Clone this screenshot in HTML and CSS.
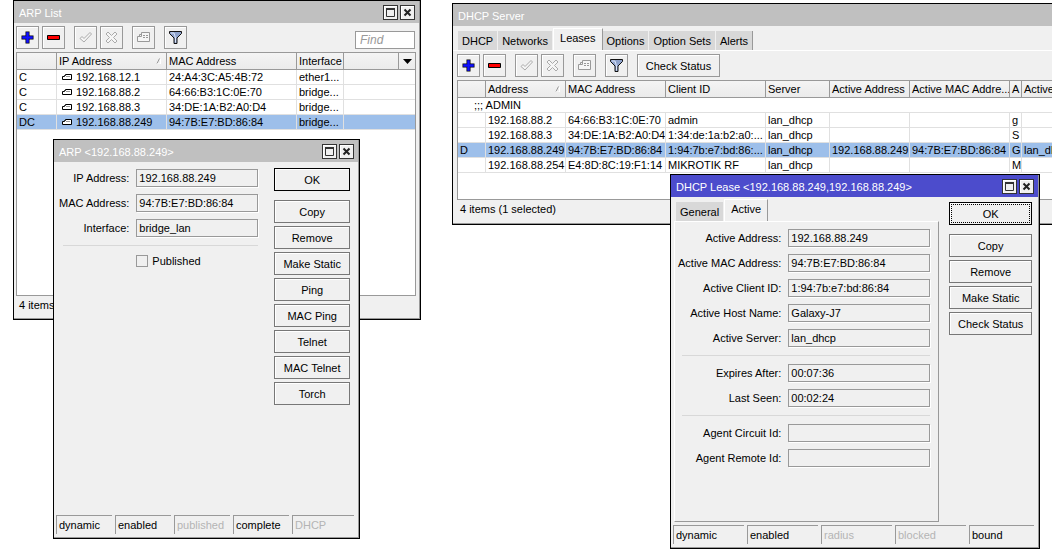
FILE: index.html
```html
<!DOCTYPE html>
<html lang="en">
<head>
	<meta charset="utf-8">
	<title>ARP List</title>
	<link rel="stylesheet" href="styles.css">
</head>
<body>
	<svg class="defs" aria-hidden="true">
		<symbol id="plus" viewBox="0 0 13 13"><path d="M4.500.5h4v4h4v4h-4v4h-4v-4h-4v-4h4z" fill="#000"/><path d="M5.500 1.500h2v4h4v2h-4v4h-2v-4h-4v-2h4z" fill="#11f" stroke="#11f" stroke-width=".6"/></symbol>
		<symbol id="minus" viewBox="0 0 13 13"><path d="M.5 4.500h12v4H.5z" fill="#f00" stroke="#000"/></symbol>
		<symbol id="check" viewBox="0 0 13 13"><path d="M1 7.500l2-2 2 2 6-6 1.500 1.500-7.500 8z" fill="#f6f6f6" stroke="#aaa"/></symbol>
		<symbol id="cross" viewBox="0 0 13 13"><path d="M1 3l2-2 3.500 3.500L10 1l2 2-3.500 3.500L12 10l-2 2-3.500-3.500L3 12l-2-2 3.500-3.500z" fill="#f6f6f6" stroke="#aaa"/></symbol>
		<symbol id="note" viewBox="0 0 15 13"><path d="M5.500 1.500h8v9h-12v-5h2v-2h2z" fill="#f6f6f6" stroke="#999"/><path d="M2 5.500h3.500V2M7 4.500h2m1 0h2M7 6.500h2m1 0h2" fill="none" stroke="#999"/></symbol>
		<symbol id="funnel" viewBox="0 0 13 13"><path d="M.5.5h12v2L8 7v5.500H5V7L.5 2.500z" fill="#8fa3cc" stroke="#111"/><path d="M2 2h3l1.500 5v4.500" fill="none" stroke="#dde6fa"/></symbol>
		<symbol id="tag" viewBox="0 0 11 8"><path d="M3.500 1.500h6v5h-9v-3h2v-1h1z" fill="#fff" stroke="#000"/><path d="M4 3.500h4" stroke="#999"/></symbol>
		<symbol id="max" viewBox="0 0 9 9"><path d="M.5.5h8v8h-8z" fill="none" stroke="#333"/><path d="M0 1h9" stroke="#333" stroke-width="2"/></symbol>
		<symbol id="close" viewBox="0 0 9 9"><path d="M1.500 1.500l6 6m0-6l-6 6" stroke="#222" stroke-width="2"/></symbol>
		<symbol id="sort" viewBox="0 0 6 6"><path d="M1 5.500L3.500.5" stroke="#999" fill="none"/><path d="M4.500 1v5H1" stroke="#fff" fill="none"/></symbol>
		<symbol id="down" viewBox="0 0 9 5"><path d="M0 0h9L4.500 5z"/></symbol>
	</svg>
	<main class="desktop">
		<section class="window arp-list">
			<header class="title">
				<h2>ARP List</h2>
				<button class="sys" aria-label="Maximize"><svg width="9" height="9"><use href="#max"/></svg></button>
				<button class="sys" aria-label="Close"><svg width="9" height="9"><use href="#close"/></svg></button>
			</header>
			<div class="toolbar">
				<button class="tool" aria-label="Add"><svg width="13" height="13"><use href="#plus"/></svg></button>
				<button class="tool" aria-label="Remove"><svg width="13" height="13"><use href="#minus"/></svg></button>
				<button class="tool group" aria-label="Enable"><svg width="13" height="13"><use href="#check"/></svg></button>
				<button class="tool" aria-label="Disable"><svg width="13" height="13"><use href="#cross"/></svg></button>
				<button class="tool group" aria-label="Comment"><svg width="15" height="13"><use href="#note"/></svg></button>
				<button class="tool group" aria-label="Filter"><svg width="13" height="13"><use href="#funnel"/></svg></button>
				<input class="find" type="text" placeholder="Find" aria-label="Find">
			</div>
			<div class="list">
				<table>
					<colgroup><col class="c40"><col class="c110"><col class="c130"><col class="c47"><col><col class="c16"></colgroup>
					<thead>
						<tr><th></th><th>IP Address<svg class="sort" width="6" height="6"><use href="#sort"/></svg></th><th>MAC Address</th><th>Interface</th><th></th><th class="pick"><button class="columns" aria-label="Columns"><svg width="9" height="5"><use href="#down"/></svg></button></th></tr>
					</thead>
					<tbody>
						<tr><td>C</td><td class="ip"><svg width="11" height="8"><use href="#tag"/></svg>192.168.12.1</td><td>24:A4:3C:A5:4B:72</td><td>ether1...</td><td colspan="2"></td></tr>
						<tr><td>C</td><td class="ip"><svg width="11" height="8"><use href="#tag"/></svg>192.168.88.2</td><td>64:66:B3:1C:0E:70</td><td>bridge...</td><td colspan="2"></td></tr>
						<tr><td>C</td><td class="ip"><svg width="11" height="8"><use href="#tag"/></svg>192.168.88.3</td><td>34:DE:1A:B2:A0:D4</td><td>bridge...</td><td colspan="2"></td></tr>
						<tr class="selected"><td>DC</td><td class="ip"><svg width="11" height="8"><use href="#tag"/></svg>192.168.88.249</td><td>94:7B:E7:BD:86:84</td><td>bridge...</td><td colspan="2"></td></tr>
					</tbody>
				</table>
			</div>
			<footer class="count">4 items</footer>
		</section>

		<section class="window dhcp-server">
			<header class="title"><h2>DHCP Server</h2></header>
			<nav class="tabs">
				<button>DHCP</button><button>Networks</button><button class="active">Leases</button><button>Options</button><button>Option Sets</button><button>Alerts</button>
			</nav>
			<div class="toolbar">
				<button class="tool" aria-label="Add"><svg width="13" height="13"><use href="#plus"/></svg></button>
				<button class="tool" aria-label="Remove"><svg width="13" height="13"><use href="#minus"/></svg></button>
				<button class="tool group" aria-label="Enable"><svg width="13" height="13"><use href="#check"/></svg></button>
				<button class="tool" aria-label="Disable"><svg width="13" height="13"><use href="#cross"/></svg></button>
				<button class="tool group" aria-label="Comment"><svg width="15" height="13"><use href="#note"/></svg></button>
				<button class="tool group" aria-label="Filter"><svg width="13" height="13"><use href="#funnel"/></svg></button>
				<button class="tool group wide">Check Status</button>
			</div>
			<div class="list">
				<table>
					<colgroup><col class="c28"><col class="c80"><col class="c100"><col class="c100"><col class="c64"><col class="c80"><col class="c100"><col class="c12"><col></colgroup>
					<thead>
						<tr><th></th><th>Address<svg class="sort" width="6" height="6"><use href="#sort"/></svg></th><th>MAC Address</th><th>Client ID</th><th>Server</th><th>Active Address</th><th>Active MAC Addre...</th><th>A</th><th>Active</th></tr>
					</thead>
					<tbody>
						<tr><td class="comment" colspan="9">;;; ADMIN</td></tr>
						<tr><td></td><td>192.168.88.2</td><td>64:66:B3:1C:0E:70</td><td>admin</td><td>lan_dhcp</td><td></td><td></td><td>g</td><td></td></tr>
						<tr><td></td><td>192.168.88.3</td><td>34:DE:1A:B2:A0:D4</td><td>1:34:de:1a:b2:a0:...</td><td>lan_dhcp</td><td></td><td></td><td>S</td><td></td></tr>
						<tr class="selected"><td>D</td><td>192.168.88.249</td><td>94:7B:E7:BD:86:84</td><td>1:94:7b:e7:bd:86:...</td><td>lan_dhcp</td><td>192.168.88.249</td><td>94:7B:E7:BD:86:84</td><td>G</td><td>lan_dhcp</td></tr>
						<tr><td></td><td>192.168.88.254</td><td>E4:8D:8C:19:F1:14</td><td>MIKROTIK RF</td><td>lan_dhcp</td><td></td><td></td><td>M</td><td></td></tr>
					</tbody>
				</table>
			</div>
			<footer class="count">4 items (1 selected)</footer>
		</section>

		<section class="window arp-entry">
			<header class="title">
				<h2>ARP &lt;192.168.88.249&gt;</h2>
				<button class="sys" aria-label="Maximize"><svg width="9" height="9"><use href="#max"/></svg></button>
				<button class="sys" aria-label="Close"><svg width="9" height="9"><use href="#close"/></svg></button>
			</header>
			<div class="dialog">
				<form class="fields">
					<label for="ip">IP Address:</label><input id="ip" type="text" value="192.168.88.249" readonly>
					<label for="mac">MAC Address:</label><input id="mac" type="text" value="94:7B:E7:BD:86:84" readonly>
					<label for="iface">Interface:</label><input id="iface" type="text" value="bridge_lan" readonly>
					<hr>
					<div class="tick"><input id="pub" type="checkbox"><label for="pub">Published</label></div>
				</form>
				<div class="actions">
					<button class="ok">OK</button>
					<button>Copy</button>
					<button>Remove</button>
					<button>Make Static</button>
					<button>Ping</button>
					<button>MAC Ping</button>
					<button>Telnet</button>
					<button>MAC Telnet</button>
					<button>Torch</button>
				</div>
			</div>
			<footer class="states"><span>dynamic</span><span>enabled</span><span class="off">published</span><span>complete</span><span class="off">DHCP</span></footer>
		</section>

		<section class="window lease focused">
			<header class="title">
				<h2>DHCP Lease &lt;192.168.88.249,192.168.88.249&gt;</h2>
				<button class="sys" aria-label="Maximize"><svg width="9" height="9"><use href="#max"/></svg></button>
				<button class="sys" aria-label="Close"><svg width="9" height="9"><use href="#close"/></svg></button>
			</header>
			<div class="dialog">
				<div class="pane">
					<nav class="tabs"><button>General</button><button class="active">Active</button></nav>
					<form class="fields">
						<label for="a-addr">Active Address:</label><input id="a-addr" type="text" value="192.168.88.249" readonly>
						<label for="a-mac">Active MAC Address:</label><input id="a-mac" type="text" value="94:7B:E7:BD:86:84" readonly>
						<label for="a-client">Active Client ID:</label><input id="a-client" type="text" value="1:94:7b:e7:bd:86:84" readonly>
						<label for="a-host">Active Host Name:</label><input id="a-host" type="text" value="Galaxy-J7" readonly>
						<label for="a-server">Active Server:</label><input id="a-server" type="text" value="lan_dhcp" readonly>
						<hr>
						<label for="expires">Expires After:</label><input id="expires" type="text" value="00:07:36" readonly>
						<label for="seen">Last Seen:</label><input id="seen" type="text" value="00:02:24" readonly>
						<hr>
						<label for="circuit">Agent Circuit Id:</label><input id="circuit" type="text" readonly>
						<label for="remote">Agent Remote Id:</label><input id="remote" type="text" readonly>
					</form>
				</div>
				<div class="actions">
					<button class="ok">OK</button>
					<button>Copy</button>
					<button>Remove</button>
					<button>Make Static</button>
					<button>Check Status</button>
				</div>
			</div>
			<footer class="states"><span>dynamic</span><span>enabled</span><span class="off">radius</span><span class="off">blocked</span><span>bound</span></footer>
		</section>
	</main>
</body>
</html>
```

FILE: styles.css
```css
* {
	box-sizing: border-box;
}
body {
	margin: 0;
	background: #fff;
	overflow: hidden;
}
body, button, input {
	font-family: "Liberation Sans", Arial, sans-serif;
	font-size: 11px;
	line-height: 14px;
	color: #000;
}
button {
	padding: 0;
	border: 1px solid #999;
	background: #f0f0f0;
}
svg {
	display: block;
}
.defs {
	display: none;
}
.desktop {
	position: relative;
	min-height: 100vh;
}

/* windows */
.window {
	position: absolute;
	display: flex;
	flex-direction: column;
	border: 1px solid #000;
	background: #f0f0f0;
	box-shadow: inset -1px -1px #999;
}
.arp-list {
	left: 13px;
	top: 0;
	width: 408px;
	min-height: 320px;
}
.dhcp-server {
	left: 452px;
	top: 3px;
	width: 640px;
	min-height: 222px;
}
.arp-entry {
	left: 53px;
	top: 139px;
	width: 307px;
	min-height: 400px;
}
.lease {
	left: 670px;
	top: 174px;
	width: 370px;
	min-height: 375px;
}
.title {
	display: flex;
	align-items: center;
	gap: 2px;
	height: 22px;
	margin-right: 1px;
	padding: 0 4px 0 5px;
	background: #c0c0c0;
}
.title h2 {
	flex: 1;
	margin: 0;
	padding-top: 2px;
	font-size: 11px;
	font-weight: normal;
	color: #fff;
}
.focused .title {
	background: #4c4ccc;
}
.sys {
	display: grid;
	place-items: center;
	width: 15px;
	height: 15px;
	border-color: #333;
	box-shadow: inset 1px 1px #fff;
}

/* toolbar */
.toolbar {
	display: flex;
	gap: 3px;
	padding: 3px 5px 3px 2px;
}
.tool {
	display: grid;
	place-items: center;
	width: 23px;
	height: 23px;
	box-shadow: inset 1px 1px #fff;
}
.group {
	margin-left: 6px;
}
.wide {
	width: 83px;
}
.find {
	width: 60px;
	height: 18px;
	margin-left: auto;
	align-self: flex-end;
	padding: 0 4px;
	border: 1px solid #999;
	font-size: 12px;
	font-style: italic;
}
.find::placeholder {
	color: #999;
}

/* tables */
.list {
	flex: 1;
	margin: 0 4px 0 2px;
	border: 1px solid #999;
	background: #fff;
}
table {
	width: 100%;
	table-layout: fixed;
	border-spacing: 0;
}
th, td {
	height: 15px;
	padding: 0 0 0 2px;
	border-right: 1px solid #e0e0e0;
	border-bottom: 1px solid #e0e0e0;
	text-align: left;
	font-weight: normal;
	white-space: nowrap;
	overflow: hidden;
}
th {
	height: 17px;
	border-color: #999;
	background: linear-gradient(#f4f4f4, #ebebeb);
}
th:last-child, td:last-child {
	border-right: 0;
}
.selected td {
	background: #9dbfea;
}
.sort {
	float: right;
	margin: 4px 4px 0 0;
}
.pick {
	padding: 0;
}
.columns {
	display: grid;
	place-items: center;
	width: 100%;
	height: 14px;
	border: 0;
	background: none;
}
.ip svg {
	display: inline-block;
	margin: 0 3px;
}
.comment {
	padding-left: 16px;
}
.c12 { width: 12px; }
.c16 { width: 16px; }
.c28 { width: 28px; }
.c40 { width: 40px; }
.c47 { width: 47px; }
.c64 { width: 64px; }
.c80 { width: 80px; }
.c100 { width: 100px; }
.c110 { width: 110px; }
.c130 { width: 130px; }
.count {
	height: 23px;
	padding: 2px 5px;
}

/* tabs */
.tabs {
	display: flex;
	align-items: flex-end;
	height: 22px;
	padding-left: 2px;
}
.tabs button {
	height: 19px;
	padding: 0 4px;
	border: 0;
	border-right: 1px solid #f0f0f0;
	background: #d8d8d8;
}
.tabs .active {
	height: 22px;
	padding: 0 6px 4px;
	border-left: 1px solid #fff;
	border-top: 1px solid #fff;
	border-right-color: #999;
	background: #f0f0f0;
}
.tabs button:last-child {
	border-right-color: #999;
}
.dhcp-server .title {
	margin-right: 0;
}
.dhcp-server .tabs {
	margin-top: 2px;
	padding-left: 5px;
}
.dhcp-server .toolbar {
	padding-left: 4px;
	border-top: 1px solid #fff;
}
.dhcp-server .list {
	margin-left: 4px;
}
.dhcp-server .count {
	height: 24px;
	padding-left: 7px;
}

/* dialogs */
.dialog {
	flex: 1;
	display: flex;
	gap: 16px;
	padding: 6px 9px 0 5px;
}
.fields {
	flex: 1;
	display: grid;
	grid-template-columns: 1fr 122px;
	grid-auto-rows: min-content;
	gap: 7px;
	padding-top: 1px;
}
.fields > label {
	padding-top: 2px;
	text-align: right;
	white-space: nowrap;
}
.fields input {
	min-width: 0;
	margin: 0;
	border: 1px solid #999;
	background: #f0f0f0;
}
.fields input[type=text] {
	height: 18px;
	padding: 0 2px 1px;
	box-shadow: 1px 1px #fff;
}
.fields hr {
	grid-column: 1 / -1;
	width: auto;
	height: 1px;
	margin: 1px 0 1px 4px;
	border: 0;
	background: #d8d8d8;
}
.tick {
	grid-column: 2;
	display: flex;
	align-items: center;
	gap: 4px;
}
.tick input {
	appearance: none;
	width: 12px;
	height: 12px;
}
.actions {
	display: flex;
	flex-direction: column;
	gap: 3px;
	width: 76px;
}
.actions button {
	height: 23px;
	border-color: #777;
	box-shadow: inset 1px 1px #fff;
}
.actions .ok {
	margin-bottom: 6px;
	border-color: #000;
}
.lease .dialog {
	gap: 10px;
	padding: 2px 7px 3px 3px;
}
.lease .actions {
	width: 83px;
	padding-top: 3px;
}
.lease .ok {
	outline: 1px dotted #000;
	outline-offset: -3px;
}
.pane {
	flex: 1;
	display: flex;
	flex-direction: column;
}
.pane .fields {
	grid-template-columns: 1fr 142px;
	padding: 7px 8px 0 3px;
	border: 1px solid #999;
	border-top-color: #fff;
	border-left-color: #fff;
}
.states {
	display: flex;
	gap: 3px;
	padding: 0 5px 4px 2px;
}
.states span {
	width: 56px;
	height: 19px;
	padding: 2px;
	border-top: 1px solid #999;
	border-left: 1px solid #999;
}
.lease .states span {
	width: 71px;
}
.states span:last-child {
	flex: 1;
}
.states .off {
	color: #b4b4b4;
}
```
